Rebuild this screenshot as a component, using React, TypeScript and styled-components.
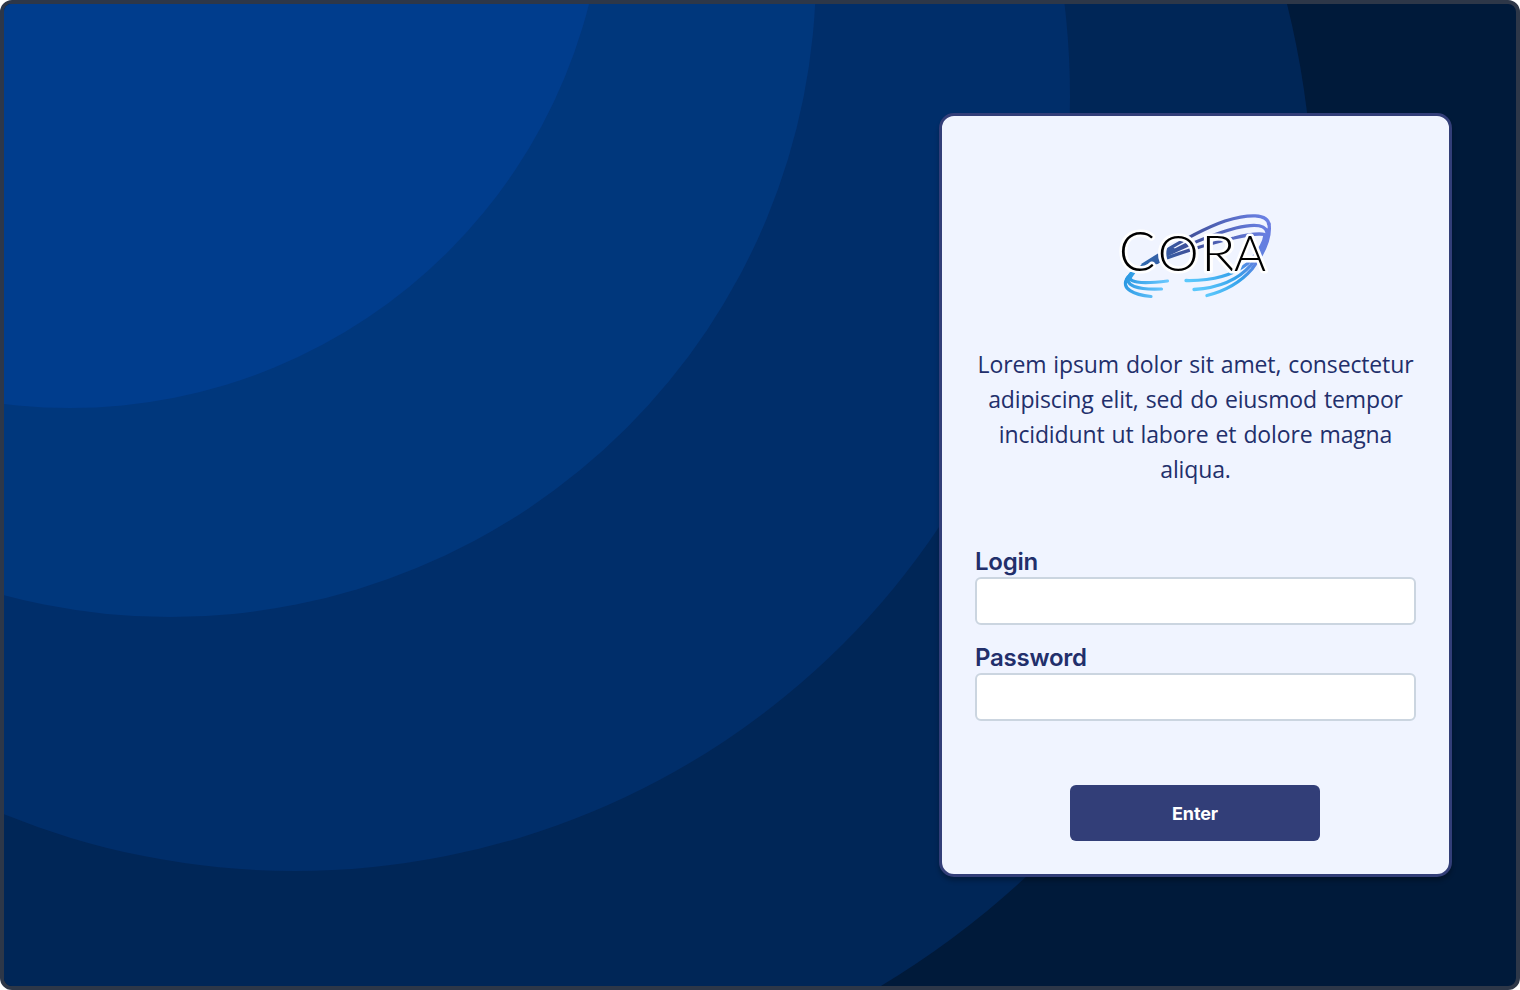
import React from "react";
import styled, { createGlobalStyle } from "styled-components";

const GlobalStyle = createGlobalStyle`
  *, *::before, *::after { box-sizing: border-box; }
  body { margin: 0; background: #ffffff; }
`;

const Screen = styled.main`
  position: relative;
  display: flex;
  justify-content: flex-end;
  align-items: flex-start;
  width: 1520px;
  height: 990px;
  padding: 109px 64px 0 0;
  border: 4px solid #2d3748;
  border-radius: 12px;
  background: #001a3a;
  overflow: hidden;
`;

const Backdrop = styled.svg`
  position: absolute;
  inset: 0;
  width: 1512px;
  height: 982px;
`;

const Card = styled.form`
  position: relative;
  display: flex;
  flex-direction: column;
  align-items: center;
  width: 513px;
  height: 764px;
  padding: 89px 33px 0;
  border: 3px solid #323e78;
  border-radius: 15px;
  background: #f0f4ff;
  box-shadow: 0 4px 4px rgba(0, 0, 0, 0.25);
`;

const Logo = styled.svg`
  display: block;
  width: 165px;
  height: 100px;
`;

const LogoLetter = styled.text<{ $size: number }>`
  font-family: Lato, sans-serif;
  font-weight: 300;
  font-size: ${(p) => p.$size}px;
  fill: #000000;
  stroke: #ffffff;
  stroke-width: 5.2px;
  stroke-linejoin: round;
  paint-order: stroke;
`;

const Intro = styled.p`
  width: 441px;
  margin: 42px 0 0;
  text-align: center;
  color: #222f6b;
  font-family: "Open Sans", sans-serif;
  font-size: 23px;
  line-height: 35px;
`;

const IntroLine = styled.span`
  display: block;
  white-space: nowrap;
  letter-spacing: -0.14px;
  word-spacing: 1.2px;
`;

const Fields = styled.div`
  display: flex;
  flex-direction: column;
  gap: 16px;
  width: 441px;
  margin-top: 58px;
`;

const Field = styled.label`
  display: flex;
  flex-direction: column;
`;

const FieldName = styled.span`
  height: 32px;
  padding-top: 1px;
  color: #222f6b;
  font-family: Inter, sans-serif;
  font-size: 24px;
  font-weight: 600;
  line-height: 32px;
  letter-spacing: -0.25px;
`;

const Input = styled.input`
  width: 100%;
  height: 48px;
  padding: 0 12px;
  border: 2px solid #cbd5e0;
  border-radius: 6px;
  background: #ffffff;
  font: 400 20px Inter, sans-serif;
  outline: none;
`;

const SubmitButton = styled.button`
  width: 250px;
  height: 56px;
  margin: 64px 1px 0 0;
  padding: 2px 0 0;
  border: 0;
  border-radius: 6px;
  background: #323e78;
  color: #ffffff;
  font: 700 18px/28px Inter, sans-serif;
  letter-spacing: -0.1px;
`;

const rings = [
  { cx: 419, cy: 220, r: 894.5, fill: "#002657" },
  { cx: 295, cy: 96, r: 775, fill: "#002e6a" },
  { cx: 170, cy: -29, r: 646, fill: "#00377c" },
  { cx: 70, cy: -127.4, r: 535.4, fill: "#003d8d" },
];

const letters = [
  { char: "C", x: 1118.8, y: 270.5, size: 55, width: 36.5 },
  { char: "O", x: 1157.8, y: 270.5, size: 49, width: 41 },
  { char: "R", x: 1201, y: 270.5, size: 49, width: 34.5 },
  { char: "A", x: 1234, y: 270.5, size: 49, width: 32 },
];

const introLines = [
  "Lorem ipsum dolor sit amet, consectetur",
  "adipiscing elit, sed do eiusmod tempor",
  "incididunt ut labore et dolore magna",
  "aliqua.",
];

function CoraLogo() {
  return (
    <Logo viewBox="1113 205 165 100" aria-label="CORA">
      <defs>
        <linearGradient id="upper" gradientUnits="userSpaceOnUse" x1="1140" y1="266" x2="1268" y2="225">
          <stop offset="0" stopColor="#2e6aae" />
          <stop offset="0.4" stopColor="#3f4f99" />
          <stop offset="1" stopColor="#6a80e4" />
        </linearGradient>
        <linearGradient id="right" gradientUnits="userSpaceOnUse" x1="1268" y1="222" x2="1208" y2="296">
          <stop offset="0" stopColor="#6a7be0" />
          <stop offset="0.42" stopColor="#5f83e0" />
          <stop offset="0.65" stopColor="#34a0ea" />
          <stop offset="1" stopColor="#5cc8fc" />
        </linearGradient>
        <linearGradient id="left" gradientUnits="userSpaceOnUse" x1="1126" y1="276" x2="1166" y2="290">
          <stop offset="0" stopColor="#2a98e2" />
          <stop offset="1" stopColor="#6cc9ff" />
        </linearGradient>
      </defs>
      <g fill="none" stroke="url(#upper)" strokeWidth="3.3">
        <path d="M1142 265.5C1169 248 1199 230 1225 221C1248 214 1268 213 1269 225" />
        <path d="M1146 265C1172 252 1205 236 1236 228C1253 224 1265 224 1267 232" />
        <path d="M1150 264.500C1170 256 1210 243 1234 238C1248 234.500 1258 233 1265 234.500" />
      </g>
      <path d="M1164 254.500Q1176 249.500 1188 243" fill="none" stroke="url(#upper)" strokeWidth="2.5" />
      <path d="M1138 267L1170 248L1175 248L1168 254L1158 264Z" fill="url(#upper)" />
      <g fill="none" stroke="url(#right)" strokeLinecap="round" strokeWidth="3.3">
        <path d="M1269 224C1271 237 1264 253 1252 269C1240 283 1225 291 1207 295.500" />
        <path d="M1267 230C1268 240 1260 253 1251 265C1238 280 1218 288 1194 289.500" />
        <path d="M1265 235C1264 244 1259 252 1247 264C1233 275 1213 281 1186 280.500" />
      </g>
      <g fill="none" stroke="url(#left)" strokeLinecap="round" strokeWidth="3.2">
        <path d="M1132 274C1124 283 1142 284 1167.500 281" />
        <path d="M1130 275C1122 286 1139 290 1161.500 289" />
        <path d="M1128 277C1119 289 1135 295 1151 296.500" />
      </g>
      <path d="M1130 272L1136 272L1129 282L1125 284L1125 279Z" fill="url(#left)" />
      {letters.map((l) => (
        <LogoLetter
          key={l.char}
          $size={l.size}
          x={l.x}
          y={l.y}
          textLength={l.width}
          lengthAdjust="spacingAndGlyphs"
        >
          {l.char}
        </LogoLetter>
      ))}
    </Logo>
  );
}

export default function App() {
  return (
    <>
      <GlobalStyle />
      <Screen>
        <Backdrop viewBox="4 4 1512 982" aria-hidden="true">
          {rings.map((ring) => (
            <circle key={ring.r} {...ring} />
          ))}
        </Backdrop>
        <Card>
          <CoraLogo />
          <Intro>
            {introLines.map((line) => (
              <IntroLine key={line}>{line}</IntroLine>
            ))}
          </Intro>
          <Fields>
            <Field>
              <FieldName>Login</FieldName>
              <Input type="text" />
            </Field>
            <Field>
              <FieldName>Password</FieldName>
              <Input type="password" />
            </Field>
          </Fields>
          <SubmitButton type="button">Enter</SubmitButton>
        </Card>
      </Screen>
    </>
  );
}
